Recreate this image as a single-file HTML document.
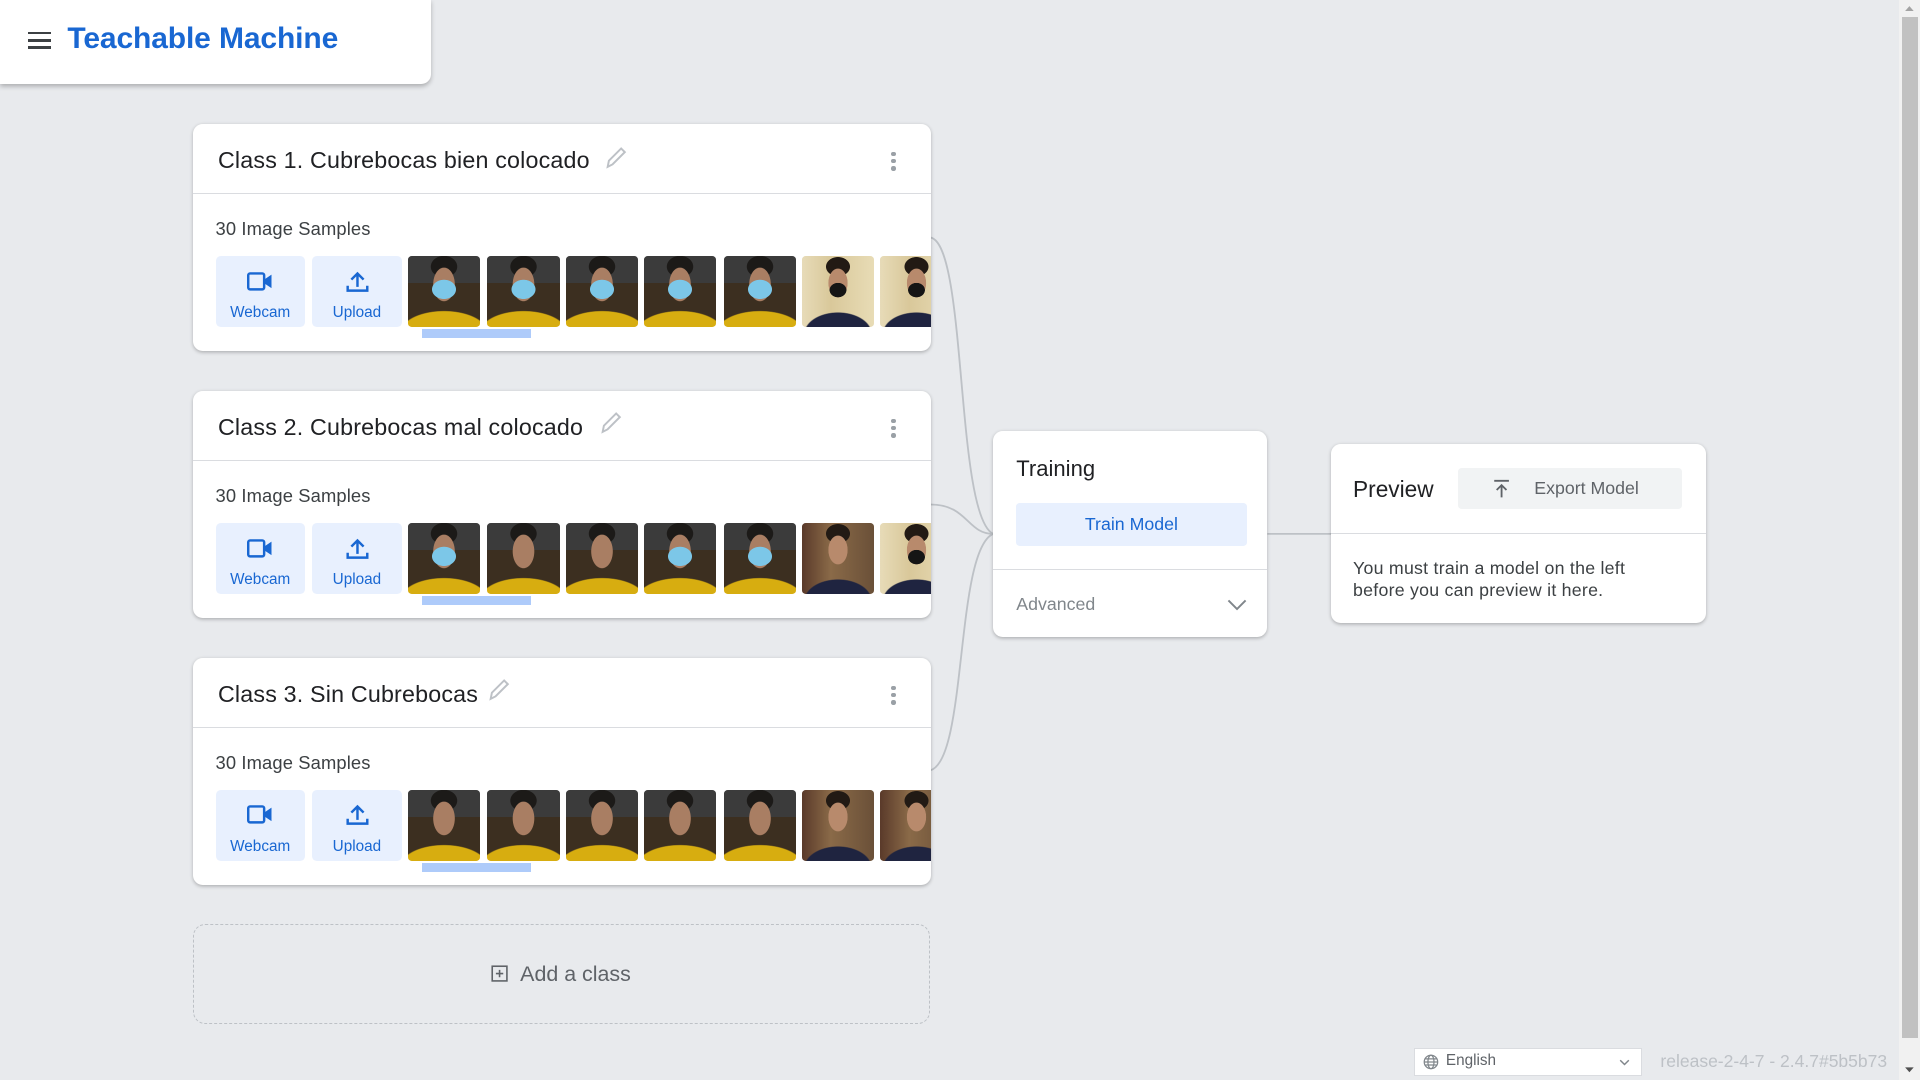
<!DOCTYPE html>
<html><head><meta charset="utf-8"><style>
html,body{margin:0;padding:0;width:1920px;height:1080px;overflow:hidden;background:#e8eaed;font-family:"Liberation Sans",sans-serif;}
#w{position:absolute;left:0;top:0;width:1568px;height:882px;zoom:1.22449;}
.a{position:absolute;}
.card{position:absolute;background:#fff;border-radius:8px;box-shadow:0 1px 3px rgba(0,0,0,.25);}
.hdr{position:absolute;left:0;right:0;top:0;height:57px;border-bottom:1px solid #dadce0;}
.title{position:absolute;left:20px;top:19px;font-size:19px;letter-spacing:.15px;color:#202124;}
.dots{position:absolute;right:28px;top:23px;width:4px;}
.dots i{display:block;width:3.5px;height:3.5px;border-radius:50%;background:#9aa0a6;margin-bottom:2.5px;}
.samp{position:absolute;left:18px;top:77px;font-size:15px;letter-spacing:.1px;color:#3c4043;}
.btn{position:absolute;top:108px;width:73px;height:58px;background:#e8f0fe;border-radius:4px;color:#1967d2;font-size:12.5px;text-align:center;}
.btn span{position:absolute;left:0;right:0;top:39px;}
.btn svg{position:absolute;left:26px;top:12px;}
.th{position:absolute;top:108px;width:59px;height:58px;border-radius:3px;overflow:hidden;}
.A{background:
 radial-gradient(ellipse 10px 8px at 50% 47%,#7cc7e8 96%,transparent 100%),
 radial-gradient(ellipse 9px 14px at 50% 40%,#a97e63 96%,transparent 100%),
 radial-gradient(ellipse 11px 9px at 50% 15%,#1c1a18 96%,transparent 100%),
 radial-gradient(ellipse 36px 18px at 50% 108%,#d7ad10 96%,transparent 100%),
 linear-gradient(#3b3b3b 0 38%,#3c2f20 38%);}
.B{background:
 radial-gradient(ellipse 7px 6px at 50% 48%,#151515 96%,transparent 100%),
 radial-gradient(ellipse 8px 12px at 50% 38%,#b88a6c 96%,transparent 100%),
 radial-gradient(ellipse 10px 8px at 50% 15%,#221a14 96%,transparent 100%),
 radial-gradient(ellipse 28px 18px at 50% 110%,#1f2440 96%,transparent 100%),
 linear-gradient(90deg,#e7dbb8,#d9c89a 40%,#e8dcb6);}
.C{background:
 radial-gradient(ellipse 9px 14px at 50% 40%,#a97e63 96%,transparent 100%),
 radial-gradient(ellipse 11px 9px at 50% 15%,#1c1a18 96%,transparent 100%),
 radial-gradient(ellipse 36px 18px at 50% 108%,#d7ad10 96%,transparent 100%),
 linear-gradient(#3b3b3b 0 38%,#3c2f20 38%);}
.D{background:
 radial-gradient(ellipse 8px 12px at 50% 38%,#b88a6c 96%,transparent 100%),
 radial-gradient(ellipse 10px 8px at 50% 15%,#221a14 96%,transparent 100%),
 radial-gradient(ellipse 28px 18px at 50% 110%,#1f2440 96%,transparent 100%),
 linear-gradient(90deg,#5a3a2a,#8a6a48 40%,#6a5038);}
.sb{position:absolute;left:187px;top:168px;width:89px;height:7px;background:#aecbfa;}
.pen{position:absolute;top:18px;}
</style></head><body><div id="w">

<svg class="a" style="left:0;top:0" width="1568" height="882">
<g fill="none" stroke="#bdc1c6" stroke-width="1.5">
<path d="M760 194 C790 200,780 420,811 436"/>
<path d="M760 412 C790 412,790 436,811 436"/>
<path d="M760 629 C790 620,780 450,811 436"/>
<path d="M1035 436 L1087 436"/>
</g></svg>

<div class="card" style="left:0;top:0;width:352px;height:69px;border-radius:0 0 8px 0;box-shadow:0 2px 4px rgba(0,0,0,.25)">
 <div class="a" style="left:23px;top:26px;width:19px;"><div style="height:2px;background:#3c4043;margin-bottom:4px"></div><div style="height:2px;background:#3c4043;margin-bottom:4px"></div><div style="height:2px;background:#3c4043"></div></div>
 <div class="a" style="left:55px;top:18px;font-size:24.5px;font-weight:bold;color:#1967d2;letter-spacing:-.1px">Teachable Machine</div>
</div>

<div class="card" style="left:158px;top:101px;width:602px;height:186px;overflow:hidden">
 <div class="hdr"><div class="title">Class 1. Cubrebocas bien colocado</div>
 <svg class="pen" style="left:335px" width="20" height="20"><path d="M3 17 L4 12 L14 2 L17 5 L7 15 Z" fill="none" stroke="#bdc1c6" stroke-width="1.6"/></svg>
 <div class="dots"><i></i><i></i><i></i></div></div>
 <div class="samp">30 Image Samples</div>
 <div class="btn" style="left:18px"><svg width="22" height="18"><rect x="1" y="2" width="13" height="13" rx="1.5" fill="none" stroke="#1967d2" stroke-width="2"/><path d="M14 7 L20 3 V14 L14 10Z" fill="#1967d2"/></svg><span>Webcam</span></div>
 <div class="btn" style="left:97px"><svg width="22" height="18"><path d="M11 13 V2 M6 7 L11 2 L16 7 M3 12 V16 H19 V12" fill="none" stroke="#1967d2" stroke-width="2"/></svg><span>Upload</span></div>
 <div class="th A" style="left:175px"></div><div class="th A" style="left:240px"></div><div class="th A" style="left:304px"></div><div class="th A" style="left:368px"></div><div class="th A" style="left:433px"></div><div class="th B" style="left:497px"></div><div class="th B" style="left:561px"></div>
 <div class="sb"></div>
</div>

<div class="card" style="left:158px;top:319px;width:602px;height:186px;overflow:hidden">
 <div class="hdr"><div class="title">Class 2. Cubrebocas mal colocado</div>
 <svg class="pen" style="left:331px;top:17px" width="20" height="20"><path d="M3 17 L4 12 L14 2 L17 5 L7 15 Z" fill="none" stroke="#bdc1c6" stroke-width="1.6"/></svg>
 <div class="dots"><i></i><i></i><i></i></div></div>
 <div class="samp">30 Image Samples</div>
 <div class="btn" style="left:18px"><svg width="22" height="18"><rect x="1" y="2" width="13" height="13" rx="1.5" fill="none" stroke="#1967d2" stroke-width="2"/><path d="M14 7 L20 3 V14 L14 10Z" fill="#1967d2"/></svg><span>Webcam</span></div>
 <div class="btn" style="left:97px"><svg width="22" height="18"><path d="M11 13 V2 M6 7 L11 2 L16 7 M3 12 V16 H19 V12" fill="none" stroke="#1967d2" stroke-width="2"/></svg><span>Upload</span></div>
 <div class="th A" style="left:175px"></div><div class="th C" style="left:240px"></div><div class="th C" style="left:304px"></div><div class="th A" style="left:368px"></div><div class="th A" style="left:433px"></div><div class="th D" style="left:497px"></div><div class="th B" style="left:561px"></div>
 <div class="sb"></div>
</div>

<div class="card" style="left:158px;top:537px;width:602px;height:186px;overflow:hidden">
 <div class="hdr"><div class="title">Class 3. Sin Cubrebocas</div>
 <svg class="pen" style="left:240px;top:17px" width="20" height="20"><path d="M3 17 L4 12 L14 2 L17 5 L7 15 Z" fill="none" stroke="#bdc1c6" stroke-width="1.6"/></svg>
 <div class="dots"><i></i><i></i><i></i></div></div>
 <div class="samp">30 Image Samples</div>
 <div class="btn" style="left:18px"><svg width="22" height="18"><rect x="1" y="2" width="13" height="13" rx="1.5" fill="none" stroke="#1967d2" stroke-width="2"/><path d="M14 7 L20 3 V14 L14 10Z" fill="#1967d2"/></svg><span>Webcam</span></div>
 <div class="btn" style="left:97px"><svg width="22" height="18"><path d="M11 13 V2 M6 7 L11 2 L16 7 M3 12 V16 H19 V12" fill="none" stroke="#1967d2" stroke-width="2"/></svg><span>Upload</span></div>
 <div class="th C" style="left:175px"></div><div class="th C" style="left:240px"></div><div class="th C" style="left:304px"></div><div class="th C" style="left:368px"></div><div class="th C" style="left:433px"></div><div class="th D" style="left:497px"></div><div class="th D" style="left:561px"></div>
 <div class="sb"></div>
</div>

<div class="a" style="left:158px;top:755px;width:600px;height:80px;border:1px dashed #bdc1c6;border-radius:10px;">
 <svg class="a" style="left:242px;top:32px" width="14" height="14"><rect x="1" y="1" width="12" height="12" fill="none" stroke="#5f6368" stroke-width="1.3"/><path d="M7 4 V10 M4 7 H10" stroke="#5f6368" stroke-width="1.3"/></svg>
 <div class="a" style="left:266px;top:30px;font-size:17.5px;color:#5f6368">Add a class</div>
</div>

<div class="card" style="left:811px;top:352px;width:224px;height:168px">
 <div class="a" style="left:19px;top:20px;font-size:18px;color:#202124">Training</div>
 <div class="a" style="left:19px;top:59px;width:188px;height:35px;background:#e8f0fe;border-radius:3px;color:#1967d2;font-size:14.5px;text-align:center;line-height:35px">Train Model</div>
 <div class="a" style="left:0;right:0;top:113px;border-top:1px solid #dadce0"></div>
 <div class="a" style="left:19px;top:133px;font-size:14.5px;color:#80868b">Advanced</div>
 <svg class="a" style="left:190px;top:136px" width="18" height="12"><path d="M2 2 L9 9 L16 2" fill="none" stroke="#80868b" stroke-width="1.6"/></svg>
</div>

<div class="card" style="left:1087px;top:363px;width:306px;height:146px">
 <div class="a" style="left:18px;top:26px;font-size:18.5px;color:#202124">Preview</div>
 <div class="a" style="left:104px;top:19px;width:183px;height:34px;background:#f1f3f4;border-radius:3px;">
  <svg class="a" style="left:28px;top:9px" width="14" height="16"><path d="M1 1.5 H13 M7 15 V5 M3 9 L7 5 L11 9" fill="none" stroke="#5f6368" stroke-width="1.5"/></svg>
  <div class="a" style="left:62px;top:8px;font-size:14.5px;color:#5f6368">Export Model</div>
 </div>
 <div class="a" style="left:0;right:0;top:72px;border-top:1px solid #dadce0"></div>
 <div class="a" style="left:18px;top:92px;font-size:14.5px;letter-spacing:.2px;line-height:18px;color:#3c4043">You must train a model on the left<br>before you can preview it here.</div>
</div>

<div class="a" style="left:1155px;top:856px;width:184px;height:21px;background:#fff;border:1px solid #dadce0;">
 <svg class="a" style="left:6px;top:4px" width="13" height="13"><g fill="none" stroke="#80868b" stroke-width="1"><circle cx="6.5" cy="6.5" r="5.5"/><ellipse cx="6.5" cy="6.5" rx="2.5" ry="5.5"/><path d="M1 6.5 H12 M2 4 H11 M2 9 H11"/></g></svg>
 <div class="a" style="left:25px;top:2px;font-size:12.5px;color:#5f6368">English</div>
 <svg class="a" style="left:166px;top:8px" width="9" height="6"><path d="M1 1 L4.5 4.5 L8 1" fill="none" stroke="#80868b" stroke-width="1.2"/></svg>
</div>
<div class="a" style="left:1356px;top:858px;font-size:14.3px;color:#bdc1c6">release-2-4-7 - 2.4.7#5b5b73</div>

<div class="a" style="left:1551px;top:0;width:17px;height:882px;background:#f1f1f1"></div>
<div class="a" style="left:1553px;top:14px;width:13px;height:834px;background:#c1c1c1"></div>
<svg class="a" style="left:1551px;top:0" width="17" height="14"><path d="M5 9 L8.5 5 L12 9Z" fill="#a3a3a3"/></svg>
<svg class="a" style="left:1551px;top:866px" width="17" height="16"><path d="M5 6 L8.5 10 L12 6Z" fill="#505050"/></svg>
</div></body></html>
